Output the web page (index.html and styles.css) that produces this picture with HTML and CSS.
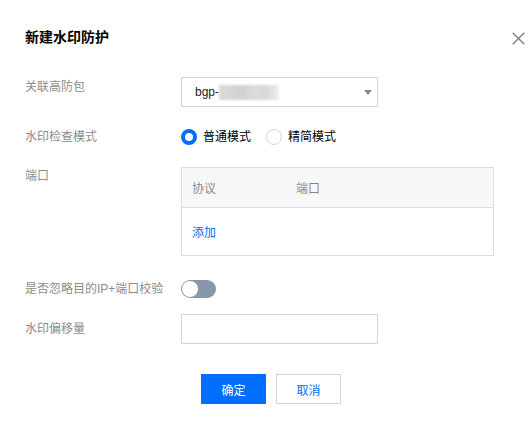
FILE: index.html
```html
<!DOCTYPE html>
<html lang="zh-CN">
<head>
<meta charset="utf-8">
<title>新建水印防护</title>
<link rel="stylesheet" href="styles.css">
</head>
<body>
<div class="dialog">
  <div class="dialog-head">
    <div class="dialog-title">新建水印防护</div>
    <svg class="close" width="13" height="13" viewBox="0 0 13 13"><path d="M0.7 0.7L12.3 12.3M12.3 0.7L0.7 12.3" stroke="#888" stroke-width="1.6" fill="none"/></svg>
  </div>
  <div class="form">
    <div class="row row-select">
      <div class="label label-top">关联高防包</div>
      <div class="control">
        <div class="select">
          <span class="select-text">bgp-</span><span class="mask"></span>
          <span class="caret"></span>
        </div>
      </div>
    </div>
    <div class="row row-radio">
      <div class="label">水印检查模式</div>
      <div class="control radios">
        <label class="radio"><span class="radio-dot checked"></span><span class="radio-text">普通模式</span></label>
        <label class="radio"><span class="radio-dot"></span><span class="radio-text">精简模式</span></label>
      </div>
    </div>
    <div class="row row-table">
      <div class="label">端口</div>
      <div class="control">
        <div class="table">
          <div class="thead">
            <div class="th th-proto">协议</div>
            <div class="th">端口</div>
          </div>
          <div class="tbody">
            <a class="link">添加</a>
          </div>
        </div>
      </div>
    </div>
    <div class="row row-switch">
      <div class="label">是否忽略目的IP+端口校验</div>
      <div class="control">
        <span class="switch"><span class="knob"></span></span>
      </div>
    </div>
    <div class="row row-input">
      <div class="label label-mid">水印偏移量</div>
      <div class="control">
        <div class="input"></div>
      </div>
    </div>
  </div>
  <div class="footer">
    <button class="btn btn-primary">确定</button>
    <button class="btn btn-weak">取消</button>
  </div>
</div>
</body>
</html>
```
FILE: styles.css
```css
* { box-sizing: border-box; }
html, body { margin: 0; padding: 0; background: #fff; }
body {
  font-family: "Liberation Sans", Arial, "Noto Sans CJK SC", sans-serif;
  font-size: 12px;
  color: #000;
  width: 530px;
  height: 428px;
  overflow: hidden;
}
.dialog { padding: 27px 5px 0 25px; }
.dialog-head {
  display: flex;
  justify-content: space-between;
  align-items: center;
  height: 20px;
}
.dialog-title { font-size: 14px; font-weight: bold; line-height: 20px; color: #000; }
.close { display: block; margin-top: 2px; }
.form { margin-top: 30px; }
.row { display: flex; }
.label {
  width: 156px;
  flex: none;
  color: #8c8c8c;
  line-height: 18px;
}
.label-top { padding-top: 1px; }
.label-mid { padding-top: 6px; }
.control { flex: none; }
.row-radio { margin-top: 21px; }
.row-table { margin-top: 21px; }
.row-switch { margin-top: 24px; }
.row-input { margin-top: 16px; }

.select {
  position: relative;
  width: 197px;
  height: 30px;
  border: 1px solid #cfd5de;
  display: flex;
  align-items: center;
  padding-left: 13px;
  font-size: 12px;
  color: #000;
}
.select-text { line-height: 18px; color: #222; }
.mask {
  display: block;
  width: 60px;
  height: 15px;
  margin-top: 1px;
  background: linear-gradient(90deg, #dadada 0%, #d2d2d2 40%, #dcdcdc 60%, #d8d8d8 80%, #efefef 100%);
  filter: blur(1px);
}
.caret {
  position: absolute;
  right: 5px;
  top: 12px;
  width: 0; height: 0;
  border-left: 4px solid transparent;
  border-right: 4px solid transparent;
  border-top: 5px solid #888;
}

.radios { display: flex; align-items: center; height: 18px; }
.radio { display: flex; align-items: center; margin-right: 15px; }
.radio-dot {
  width: 16px; height: 16px;
  border-radius: 50%;
  border: 1px solid #cfd5de;
  background: #fff;
  margin-right: 6px;
}
.radio-dot.checked { border: 4px solid #006eff; }
.radio-text { line-height: 18px; color: #000; }

.table {
  width: 313px;
  border: 1px solid #d9dde4;
}
.thead {
  display: flex;
  align-items: center;
  height: 40px;
  background: #f7f8fa;
  border-bottom: 1px solid #d9dde4;
  color: #888;
  padding-left: 10px;
}
.th-proto { width: 104px; }
.tbody {
  height: 47px;
  display: flex;
  align-items: center;
  padding-left: 10px;
}
.link { color: #006eff; cursor: pointer; }

.switch {
  display: block;
  position: relative;
  width: 35px;
  height: 18px;
  border-radius: 9px;
  background: #8a97ab;
}
.knob {
  position: absolute;
  left: 1px; top: 1px;
  width: 16px; height: 16px;
  border-radius: 50%;
  background: #fff;
}

.input {
  width: 197px;
  height: 30px;
  border: 1px solid #cfd5de;
}

.footer {
  margin-top: 30px;
  display: flex;
  justify-content: center;
  padding-right: 8px;
  gap: 10px;
}
.btn {
  width: 65px;
  height: 30px;
  font-family: inherit;
  font-size: 12px;
  padding: 0;
  cursor: pointer;
}
.btn-primary { background: #006eff; border: 1px solid #006eff; color: #fff; }
.btn-weak { background: #fff; border: 1px solid #cfd5de; color: #006eff; }
```
